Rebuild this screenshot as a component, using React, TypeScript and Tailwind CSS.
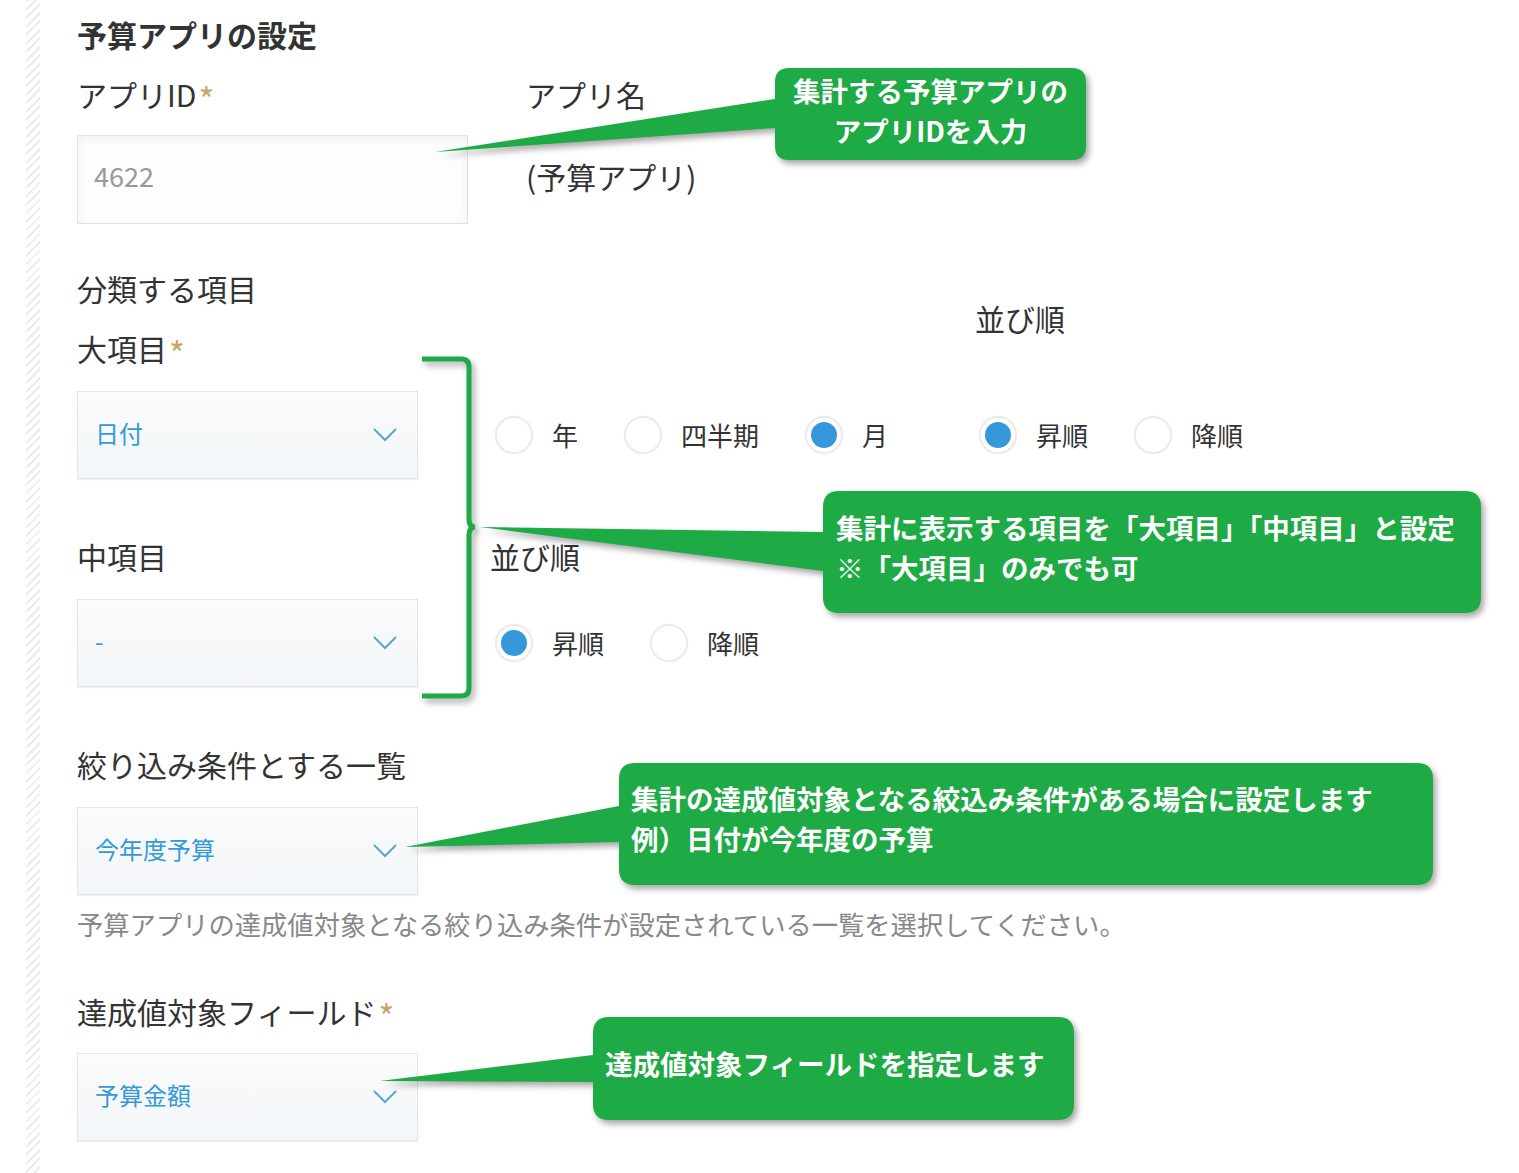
import React from "react";

const GREEN = "#1eaa45";

// rounded box with a pointer coming out of its left side
function calloutPath(
  x: number,
  y: number,
  w: number,
  h: number,
  r: number,
  tx: number,
  ty: number,
  y1: number,
  y2: number,
) {
  return `M${x + r},${y} H${x + w - r} Q${x + w},${y} ${x + w},${y + r} V${y + h - r} Q${x + w},${y + h} ${x + w - r},${y + h} H${x + r} Q${x},${y + h} ${x},${y + h - r} V${y2} L${tx},${ty} L${x},${y1} V${y + r} Q${x},${y} ${x + r},${y} Z`;
}

function Label({
  children,
  required,
  className = "",
}: {
  children: React.ReactNode;
  required?: boolean;
  className?: string;
}) {
  return (
    <div className={`text-[30px] leading-[40px] pb-[4px] whitespace-nowrap ${className}`}>
      {children}
      {required && (
        <span className="ml-[2px] text-[34px] leading-[0] align-[-6px] text-[#c9a368]">*</span>
      )}
    </div>
  );
}

function Select({ value, className = "" }: { value: string; className?: string }) {
  return (
    <div
      className={`w-[341px] h-[88px] border border-[#e3e7e8] bg-gradient-to-b from-[#f9fbfc] to-[#f3f6f8] shadow-[0_1px_1px_rgba(0,0,0,0.06)] flex items-center justify-between pl-[17px] pr-[20px] ${className}`}
    >
      <span className="text-[24px] leading-[32px] pb-[5px] text-[#3498db]">{value}</span>
      <svg width="24" height="14" viewBox="0 0 24 14">
        <polyline points="1,1 12,12 23,1" fill="none" stroke="#5aa6da" strokeWidth="2" />
      </svg>
    </div>
  );
}

function Radio({ label, checked }: { label: string; checked?: boolean }) {
  return (
    <div className="flex items-center mr-[46px]">
      <div className="w-[38px] h-[38px] rounded-full border-2 border-[#ebebeb] bg-white shadow-[0_0_2px_rgba(0,0,0,0.06)] flex items-center justify-center">
        {checked && <div className="w-[26px] h-[26px] rounded-full bg-[#3498db]" />}
      </div>
      <span className="ml-[19px] text-[26px] leading-[38px] whitespace-nowrap">{label}</span>
    </div>
  );
}

export default function App() {
  return (
    <div className="relative w-[1519px] h-[1173px] overflow-hidden bg-white font-['Noto_Sans_CJK_JP',sans-serif] text-[#333]">
      <div className="flex h-full">
        <div className="w-[26px]" />
        <div className="w-[14px] h-full bg-[repeating-linear-gradient(135deg,#ececec_0px,#ececec_2px,#ffffff_2px,#ffffff_6px)]" />

        <div className="pl-[37px] pt-[14px]">
          <h2 className="text-[30px] font-bold leading-[40px] pb-[4px]">予算アプリの設定</h2>

          {/* app id / name */}
          <div className="mt-[16px] flex">
            <div className="w-[449px]">
              <Label required>アプリID</Label>
              <div className="mt-[17px] w-[391px] h-[89px] border border-[#e3e3e3] bg-[#fdfdfd] shadow-[inset_0_2px_8px_rgba(0,0,0,0.06)] flex items-center pl-[16px] pb-[6px] text-[27px] text-[#999]">
                4622
              </div>
            </div>
            <div>
              <Label>アプリ名</Label>
              <Label className="mt-[38px]">(予算アプリ)</Label>
            </div>
          </div>

          {/* 大項目 */}
          <div className="mt-[44px] flex items-start">
            <div className="w-[340px]">
              <Label>分類する項目</Label>
              <Label className="mt-[16px]" required>
                大項目
              </Label>
              <Select className="mt-[19px]" value="日付" />
            </div>
            <div className="ml-[73px] flex items-start">
              <div className="w-[485px] pt-[148px] pl-[5px] flex items-start">
                <Radio label="年" />
                <Radio label="四半期" />
                <Radio label="月" checked />
              </div>
              <div className="pt-[30px]">
                <Label>並び順</Label>
                <div className="mt-[74px] pl-[4px] flex items-start">
                  <Radio label="昇順" checked />
                  <Radio label="降順" />
                </div>
              </div>
            </div>
          </div>

          {/* 中項目 */}
          <div className="mt-[57px] flex items-start">
            <div className="w-[340px]">
              <Label>中項目</Label>
              <Select className="mt-[19px]" value="-" />
            </div>
            <div className="ml-[73px]">
              <Label>並び順</Label>
              <div className="mt-[44px] pl-[5px] flex items-start">
                <Radio label="昇順" checked />
                <Radio label="降順" />
              </div>
            </div>
          </div>

          {/* 絞り込み */}
          <Label className="mt-[57px]">絞り込み条件とする一覧</Label>
          <Select className="mt-[19px]" value="今年度予算" />
          <p className="mt-[11px] text-[26.3px] leading-[36px] pb-[4px] text-[#888] whitespace-nowrap">
            予算アプリの達成値対象となる絞り込み条件が設定されている一覧を選択してください。
          </p>

          {/* 達成値 */}
          <Label className="mt-[45px]" required>
            達成値対象フィールド
          </Label>
          <Select className="mt-[18px]" value="予算金額" />
        </div>
      </div>

      {/* annotation layer */}
      <svg
        className="absolute inset-0 pointer-events-none drop-shadow-[3px_4px_3px_rgba(0,0,0,0.35)]"
        width="1519"
        height="1173"
        viewBox="0 0 1519 1173"
      >
        <path
          d="M422,359 H461 Q469,359 469,367 V519 Q469,527 475,527 Q469,527 469,535 V688 Q469,696 461,696 H422"
          fill="none"
          stroke={GREEN}
          strokeWidth="5"
        />
        <path d={calloutPath(775, 68, 311, 92, 14, 435, 152, 99, 128)} fill={GREEN} />
        <path d={calloutPath(823, 491, 658, 122, 16, 480, 527, 532, 571)} fill={GREEN} />
        <path d={calloutPath(619, 763, 814, 122, 16, 405, 847, 806, 842)} fill={GREEN} />
        <path d={calloutPath(593, 1017, 481, 103, 16, 380, 1081, 1055, 1082)} fill={GREEN} />
      </svg>

      <div className="absolute left-[775px] top-[68px] w-[311px] h-[92px] pb-[8px] flex flex-col items-center justify-center text-white font-bold text-[27.5px] leading-[40px] whitespace-nowrap">
        <span>集計する予算アプリの</span>
        <span>アプリIDを入力</span>
      </div>
      <div className="absolute left-[823px] top-[491px] w-[658px] h-[122px] pl-[13px] pt-[16px] text-white font-bold text-[27.5px] leading-[40px] whitespace-nowrap">
        <div>集計に表示する項目を「大項目」「中項目」と設定</div>
        <div>※「大項目」のみでも可</div>
      </div>
      <div className="absolute left-[619px] top-[763px] w-[814px] h-[122px] pl-[12px] pt-[15px] text-white font-bold text-[27.5px] leading-[40px] whitespace-nowrap">
        <div>集計の達成値対象となる絞込み条件がある場合に設定します</div>
        <div>例）日付が今年度の予算</div>
      </div>
      <div className="absolute left-[593px] top-[1017px] w-[481px] h-[103px] pl-[12px] pt-[26px] text-white font-bold text-[27.5px] leading-[40px] whitespace-nowrap">
        達成値対象フィールドを指定します
      </div>
    </div>
  );
}
